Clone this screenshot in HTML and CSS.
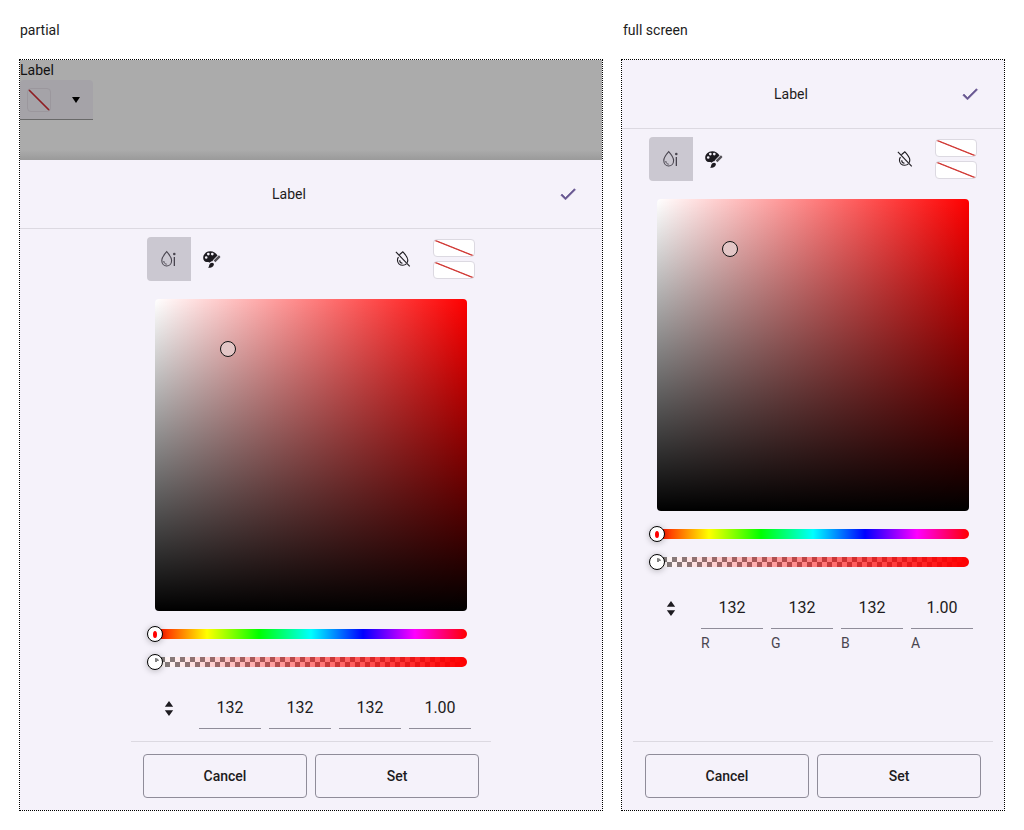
FILE: index.html
```html
<!DOCTYPE html>
<html lang="en">
<head>
    <meta charset="UTF-8">
    <title>Color picker</title>
    <link rel="stylesheet" href="styles.css">
</head>
<body>
    <svg class="defs" width="0" height="0">
        <symbol id="i-check" viewBox="0 0 24 24"><path d="M9 16.2 4.8 12l-1.4 1.4L9 19 21 7l-1.4-1.4z"/></symbol>
        <symbol id="i-drop" viewBox="0 0 24 24">
            <path d="M9.700 4.700c-2.500 2.800-4.900 5.600-4.900 8.800 0 3.200 2.200 5.500 4.900 5.500s4.900-2.300 4.900-5.500c0-3.200-2.400-6-4.900-8.800z" fill="none" stroke="currentColor" stroke-width="1.100"/>
            <path d="M6.800 14c0 1.900 1.200 3 2.900 3.200" fill="none" stroke="currentColor" stroke-width="1"/>
            <circle cx="17.300" cy="7" r="1.300"/>
            <rect x="16.700" y="10" width="1.300" height="9"/>
        </symbol>
        <symbol id="i-palette" viewBox="0 0 24 24">
            <path d="M10.500 1.500C5.300 1.500 1.500 5.300 1.500 10c0 2.900 1.900 5 4.500 5h1.800c.9 0 1.500.5 1.600 1.200 1-1.300 2.400-2 3.700-2 .4-.9 1.100-1.800 1.800-2.500l4.700-4.800C17.600 3.700 14.500 1.500 10.500 1.500zM5.300 11.200a1.700 1.700 0 1 1 0-3.400 1.700 1.700 0 0 1 0 3.400zm2.700-4.400a1.700 1.700 0 1 1 0-3.400 1.700 1.700 0 0 1 0 3.400zm5 0a1.700 1.700 0 1 1 0-3.400 1.700 1.700 0 0 1 0 3.400z"/>
            <path d="M12.800 16c-2 0-3.500 1.600-3.800 3.500-.2 1.200-.5 2.200-1.300 3 2.700.2 6.600-1 7.300-4 .3-1.300-.8-2.500-2.200-2.500z"/>
            <path d="m16.900 15.600-2.200-2.200 6-6.100c.4-.4 1-.4 1.400 0l.8.800c.4.400.4 1 0 1.400z" opacity="0.75"/>
        </symbol>
        <symbol id="i-drop-off" viewBox="0 0 24 24">
            <path d="M7.200 6.300 11.800 2.500c3 3.300 6.600 6.900 6.600 10.900 0 1.300-.3 2.500-.9 3.600M6 9.600C5 11 4.600 12.300 4.600 13.400c0 4 3 7 7.200 7 1.900 0 3.500-.7 4.700-1.800" fill="none" stroke="currentColor" stroke-width="1.500"/>
            <path d="M7.600 13.800c0 2.200 1.600 3.700 3.700 3.900" fill="none" stroke="currentColor" stroke-width="1.500"/>
            <path d="M2.500 2.500 21 21.800" fill="none" stroke="currentColor" stroke-width="1.500"/>
        </symbol>
        <symbol id="i-swap" viewBox="0 0 12 18"><path d="M6 0 11 7H1zM6 18 1 11h10z"/></symbol>
    </svg>

    <div class="page">
        <div class="caption">partial</div>
        <div class="caption caption-right">full screen</div>

        <div class="frame">
            <div class="backdrop">
                <div class="field-label">Label</div>
                <div class="field">
                    <span class="field-swatch"></span>
                    <span class="field-arrow"></span>
                </div>
            </div>
            <div class="sheet">
                <div class="sheet-header">
                    <div class="sheet-title">Label</div>
                    <div class="header-btn"><svg class="icon-check"><use href="#i-check"/></svg></div>
                </div>
                <div class="toolbar">
                    <div class="tool tool-active"><svg class="icon-24"><use href="#i-drop"/></svg></div>
                    <div class="tool"><svg class="icon-palette"><use href="#i-palette"/></svg></div>
                    <div class="tool tool-right"><svg class="icon-off"><use href="#i-drop-off"/></svg></div>
                    <div class="swatches">
                        <span class="swatch"></span>
                        <span class="swatch"></span>
                    </div>
                </div>
                <div class="square"><span class="square-thumb"></span></div>
                <div class="track track-hue"><span class="thumb"><i class="hue-dot"></i></span></div>
                <div class="track track-alpha"><span class="thumb"><i class="alpha-dot"></i></span></div>
                <div class="values">
                    <div class="swap"><svg class="icon-swap"><use href="#i-swap"/></svg></div>
                    <div class="value">132</div>
                    <div class="value">132</div>
                    <div class="value">132</div>
                    <div class="value">1.00</div>
                </div>
                <div class="sheet-footer">
                    <button class="btn">Cancel</button>
                    <button class="btn">Set</button>
                </div>
            </div>
        </div>

        <div class="frame">
            <div class="sheet">
                <div class="sheet-header">
                    <div class="sheet-title">Label</div>
                    <div class="header-btn"><svg class="icon-check"><use href="#i-check"/></svg></div>
                </div>
                <div class="toolbar">
                    <div class="tool tool-active"><svg class="icon-24"><use href="#i-drop"/></svg></div>
                    <div class="tool"><svg class="icon-palette"><use href="#i-palette"/></svg></div>
                    <div class="tool tool-right"><svg class="icon-off"><use href="#i-drop-off"/></svg></div>
                    <div class="swatches">
                        <span class="swatch"></span>
                        <span class="swatch"></span>
                    </div>
                </div>
                <div class="square"><span class="square-thumb"></span></div>
                <div class="track track-hue"><span class="thumb"><i class="hue-dot"></i></span></div>
                <div class="track track-alpha"><span class="thumb"><i class="alpha-dot"></i></span></div>
                <div class="values">
                    <div class="swap"><svg class="icon-swap"><use href="#i-swap"/></svg></div>
                    <div class="value">132</div>
                    <div class="value">132</div>
                    <div class="value">132</div>
                    <div class="value">1.00</div>
                </div>
                <div class="value-labels">
                    <span>R</span>
                    <span>G</span>
                    <span>B</span>
                    <span>A</span>
                </div>
                <div class="sheet-footer">
                    <button class="btn">Cancel</button>
                    <button class="btn">Set</button>
                </div>
            </div>
        </div>
    </div>
</body>
</html>
```

FILE: styles.css
```css
body {
    margin: 0;
    background: #fff;
    font-family: Roboto, "Liberation Sans", sans-serif;
    font-size: 14px;
    color: #1d1b20;
}

.defs {
    position: absolute;
}

.page {
    display: grid;
    grid-template-columns: 584px 384px;
    grid-template-rows: 59px 752px;
    column-gap: 18px;
    padding-left: 19px;
}

.caption {
    padding: 20px 0 0 1px;
    line-height: 20px;
    color: #1c1c1c;
}

.caption-right {
    padding-left: 2px;
}

.frame {
    display: flex;
    flex-direction: column;
    border: 1px dotted #000;
}

.backdrop {
    height: 100px;
    flex: none;
    background: linear-gradient(to bottom, #ababab 90%, #9a9a9a);
    color: #111;
}

.field-label {
    height: 20px;
    line-height: 20px;
}

.field {
    display: flex;
    align-items: center;
    width: 73px;
    height: 40px;
    box-sizing: border-box;
    padding: 0 0 0 7px;
    background: #a5a3a8;
    border-bottom: 1px solid #696969;
    border-radius: 4px 4px 0 0;
}

.field-swatch {
    width: 24px;
    height: 24px;
    box-sizing: border-box;
    border: 1px solid #9b979d;
    border-radius: 4px;
    background: linear-gradient(to top right, transparent calc(50% - 1.2px), #8f1d22 calc(50% - 0.4px), #8f1d22 calc(50% + 0.4px), transparent calc(50% + 1.2px));
}

.field-arrow {
    margin: 1px 0 0 21px;
    border-top: 6px solid #000;
    border-left: 4px solid transparent;
    border-right: 4px solid transparent;
}

.sheet {
    flex: 1;
    display: flex;
    flex-direction: column;
    align-items: center;
    background: #f5f2fa;
}

.sheet-header {
    display: flex;
    align-items: center;
    align-self: stretch;
    flex: none;
    height: 68px;
    padding: 0 12px;
    border-bottom: 1px solid #dcd9e1;
}

.sheet-title {
    flex: 1;
    text-align: center;
}

.header-btn {
    display: flex;
    align-items: center;
    justify-content: center;
    width: 44px;
    height: 44px;
}

.icon-check {
    width: 20px;
    height: 20px;
    fill: #65558f;
    stroke: #65558f;
    stroke-width: 0.7;
}

.toolbar {
    display: flex;
    align-items: center;
    flex: none;
    width: 328px;
    height: 44px;
    margin-top: 8px;
}

.tool {
    display: flex;
    align-items: center;
    justify-content: center;
    width: 44px;
    height: 44px;
}

.tool-active {
    background: #cbc8d1;
    border-radius: 4px 0 0 4px;
}

.tool-right {
    margin-left: auto;
}

.icon-24 {
    width: 24px;
    height: 24px;
    fill: #49454f;
    color: #49454f;
}

.icon-palette {
    width: 19px;
    height: 19px;
    margin-right: 3px;
    fill: #1d1b20;
}

.icon-off {
    width: 18px;
    height: 18px;
    color: #1d1b20;
}

.swatches {
    display: flex;
    flex-direction: column;
    gap: 4px;
    margin-left: 8px;
}

.swatch {
    display: block;
    width: 42px;
    height: 18px;
    box-sizing: border-box;
    border: 1px solid #dcd9e1;
    border-radius: 4px;
    background: linear-gradient(to top right, #fff calc(50% - 1.1px), #d2403c calc(50% - 0.3px), #d2403c calc(50% + 0.3px), #fff calc(50% + 1.1px));
}

.square {
    position: relative;
    flex: none;
    width: 312px;
    height: 312px;
    margin-top: 18px;
    border-radius: 4px;
    background: linear-gradient(to bottom, transparent, #000), linear-gradient(to right, #fff, #f00);
}

.square-thumb {
    position: absolute;
    left: 65px;
    top: 42px;
    width: 16px;
    height: 16px;
    box-sizing: border-box;
    border: 1.5px solid #111;
    border-radius: 50%;
    background: #e3c6c6;
}

.track {
    position: relative;
    flex: none;
    width: 312px;
    height: 10px;
    margin-top: 18px;
    border-radius: 5px;
}

.track-hue {
    background: linear-gradient(to right, #f00, #ff0, #0f0, #0ff, #00f, #f0f, #f00);
}

.track-alpha {
    background:
        linear-gradient(to right, rgba(255, 0, 0, 0), #f00),
        conic-gradient(#808080 25%, #fff 0 50%, #808080 0 75%, #fff 0) 0 0 / 10px 10px;
}

.thumb {
    position: absolute;
    left: -8px;
    top: -3px;
    display: flex;
    align-items: center;
    justify-content: center;
    width: 16px;
    height: 16px;
    box-sizing: border-box;
    border: 1.5px solid #000;
    border-radius: 50%;
    background: #fff;
    box-shadow: 0 1px 6px rgba(0, 0, 0, 0.25);
}

.hue-dot {
    width: 4px;
    height: 7px;
    border-radius: 50%;
    background: #f00;
}

.alpha-dot {
    width: 8px;
    height: 8px;
    border-radius: 50%;
    background: conic-gradient(#808080 20%, transparent 0);
}

.values {
    display: flex;
    flex: none;
    gap: 8px;
    width: 328px;
    height: 42px;
    margin-top: 20px;
}

.swap {
    display: flex;
    align-items: center;
    justify-content: center;
    width: 44px;
}

.icon-swap {
    width: 10px;
    height: 15px;
    fill: #1d1b20;
}

.value {
    width: 62px;
    box-sizing: border-box;
    border-bottom: 1px solid #8f8c99;
    font-size: 16px;
    line-height: 42px;
    text-align: center;
}

.value-labels {
    display: flex;
    flex: none;
    gap: 8px;
    width: 328px;
    padding: 4px 0 0 52px;
    box-sizing: border-box;
    color: #49454f;
    line-height: 20px;
}

.value-labels span {
    width: 62px;
}

.sheet-footer {
    display: flex;
    flex: none;
    gap: 8px;
    width: 360px;
    box-sizing: border-box;
    margin-top: auto;
    padding: 12px;
    border-top: 1px solid #dcd9e1;
}

.btn {
    width: 164px;
    height: 44px;
    padding: 0;
    background: transparent;
    border: 1px solid #8f8c99;
    border-radius: 4px;
    color: #1d1b20;
    font-family: inherit;
    font-size: 14px;
    font-weight: 500;
}
```
